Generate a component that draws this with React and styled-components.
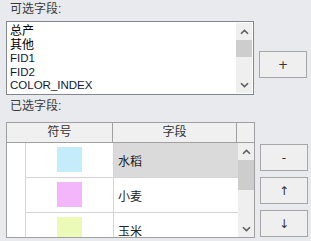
import React from "react";
import styled, { createGlobalStyle } from "styled-components";

const fields = ["总产", "其他", "FID1", "FID2", "COLOR_INDEX"];
const selected = [
  { name: "水稻", color: "#c4ecfb", active: true },
  { name: "小麦", color: "#f4b6fb" },
  { name: "玉米", color: "#ebfab6" },
];

const Chevron = ({ down }) => (
  <svg width="9" height="6" viewBox="0 0 9 6">
    <path
      d={down ? "M1 1.2 L4.5 4.6 L8 1.2" : "M1 4.8 L4.5 1.4 L8 4.8"}
      fill="none"
      stroke="#5f5f5f"
      strokeWidth="1.6"
    />
  </svg>
);

export default function App() {
  return (
    <>
      <Global />
      <Page>
        <Label>可选字段:</Label>
        <Row>
          <ListBox>
            <Items>
              {fields.map((f, i) => (
                <Item key={f} $cjk={i < 2}>
                  {f}
                </Item>
              ))}
            </Items>
            <ScrollBar>
              <Arrow>
                <Chevron />
              </Arrow>
              <Thumb $h={17} />
              <Track />
              <Arrow>
                <Chevron down />
              </Arrow>
            </ScrollBar>
          </ListBox>
          <Side $top={30}>
            <Button>+</Button>
          </Side>
        </Row>
        <Label $top={5} $h={27}>
          已选字段:
        </Label>
        <Row>
          <Table>
            <Main>
              <HeadRow>
                <HeadCell $w={106}>符号</HeadCell>
                <HeadCell $w={124}>字段</HeadCell>
              </HeadRow>
              <Body>
                <Gutter />
                <Rows>
                  {selected.map((r) => (
                    <DataRow key={r.name}>
                      <SwatchCell>
                        <Swatch $color={r.color} />
                      </SwatchCell>
                      <FieldCell $active={r.active}>{r.name}</FieldCell>
                    </DataRow>
                  ))}
                </Rows>
              </Body>
            </Main>
            <ScrollCol>
              <HeadBlank />
              <TableScroll>
                <Arrow $h={17}>
                  <Chevron />
                </Arrow>
                <Thumb $h={30} />
                <Track />
                <Arrow $h={17}>
                  <Chevron down />
                </Arrow>
              </TableScroll>
            </ScrollCol>
          </Table>
          <Side $top={22}>
            <Button>-</Button>
            <Button>↑</Button>
            <Button>↓</Button>
          </Side>
        </Row>
      </Page>
    </>
  );
}

const Global = createGlobalStyle`
  body {
    margin: 0;
    background: #e9eaee;
  }
`;
const Page = styled.div`
  width: 311px;
  height: 241px;
  box-sizing: border-box;
  padding: 3px 0 0 6px;
  background: #e9eaee;
  font-family: "Liberation Sans", "Noto Sans CJK SC", sans-serif;
  font-size: 12px;
  color: #333;
  overflow: hidden;
`;
const Label = styled.div`
  height: ${(p) => p.$h || 18}px;
  box-sizing: border-box;
  padding: ${(p) => p.$top || 0}px 0 0 4px;
  line-height: 13px;
  color: #3a3a3a;
`;
const Row = styled.div`
  display: flex;
  align-items: flex-start;
`;
const ListBox = styled.div`
  width: 248px;
  height: 74px;
  box-sizing: border-box;
  border: 1px solid #82868e;
  background: #fff;
  padding: 1px;
  display: flex;
`;
const Items = styled.div`
  flex: 1;
  padding: 2px 0 0 2px;
`;
const Item = styled.div`
  height: 13.5px;
  line-height: 13.5px;
  font-size: ${(p) => (p.$cjk ? 12 : 11.5)}px;
  color: ${(p) => (p.$cjk ? "#000" : "#101838")};
`;
const ScrollBar = styled.div`
  width: 16px;
  background: #efefef;
  display: flex;
  flex-direction: column;
`;
const Arrow = styled.div`
  height: ${(p) => p.$h || 17}px;
  display: flex;
  align-items: center;
  justify-content: center;
`;
const Thumb = styled.div`
  height: ${(p) => p.$h}px;
  background: #cdcdcd;
`;
const Track = styled.div`
  flex: 1;
`;
const Side = styled.div`
  margin: ${(p) => p.$top}px 0 0 5px;
  display: flex;
  flex-direction: column;
  gap: 6px;
`;
const Button = styled.div`
  width: 48px;
  height: 27px;
  box-sizing: border-box;
  border: 1px solid #a6a6a6;
  background: #efefef;
  display: flex;
  align-items: center;
  justify-content: center;
  font-family: "DejaVu Sans", sans-serif;
  font-size: 12px;
  color: #333;
`;
const Table = styled.div`
  width: 249px;
  height: 116px;
  box-sizing: border-box;
  border: 1px solid #a0a0a0;
  background: #fff;
  display: flex;
  overflow: hidden;
`;
const Main = styled.div`
  width: 231px;
  display: flex;
  flex-direction: column;
`;
const HeadRow = styled.div`
  display: flex;
  height: 20px;
  box-sizing: border-box;
  border-bottom: 1px solid #a0a0a0;
  background: #f0f0f0;
`;
const HeadCell = styled.div`
  width: ${(p) => p.$w}px;
  box-sizing: border-box;
  border-right: 1px solid #a0a0a0;
  text-align: center;
  line-height: 19px;
  color: #333;
`;
const Body = styled.div`
  flex: 1;
  display: flex;
`;
const Gutter = styled.div`
  width: 19px;
  box-sizing: border-box;
  border-right: 1px solid #d4d4d4;
`;
const Rows = styled.div`
  flex: 1;
`;
const DataRow = styled.div`
  display: flex;
  height: 35px;
  box-sizing: border-box;
  border-bottom: 1px solid #d4d4d4;
`;
const SwatchCell = styled.div`
  width: 88px;
  box-sizing: border-box;
  border-right: 1px solid #d4d4d4;
  padding: 4px 0 0 31px;
`;
const Swatch = styled.div`
  width: 25px;
  height: 25px;
  background: ${(p) => p.$color};
`;
const FieldCell = styled.div`
  flex: 1;
  padding-left: 4px;
  display: flex;
  align-items: center;
  background: ${(p) => (p.$active ? "#dadada" : "#fff")};
  color: #222;
`;
const ScrollCol = styled.div`
  flex: 1;
  display: flex;
  flex-direction: column;
`;
const HeadBlank = styled.div`
  height: 20px;
  box-sizing: border-box;
  border-bottom: 1px solid #a0a0a0;
  background: #f0f0f0;
`;
const TableScroll = styled.div`
  flex: 1;
  display: flex;
  flex-direction: column;
  background: #efefef;
`;
